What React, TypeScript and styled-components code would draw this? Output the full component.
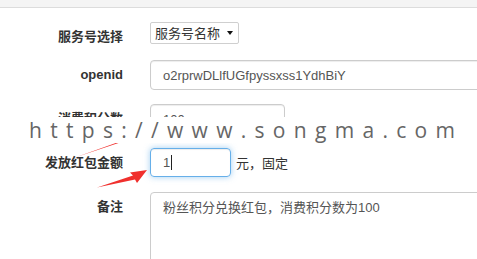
import styled, { createGlobalStyle } from "styled-components";

const GlobalStyle = createGlobalStyle`
  html, body {
    margin: 0;
    padding: 0;
    background: #fff;
    overflow: hidden;
  }
  body {
    font-family: "Liberation Sans", Arial, "Noto Sans CJK SC", sans-serif;
    font-size: 13px;
    color: #333;
  }
`;

const Page = styled.div`
  position: relative;
  width: 477px;
  height: 259px;
  overflow: hidden;
`;

const TopBar = styled.div`
  height: 7px;
  background: #f4f4f4;
  border-bottom: 1px solid #dcdcdc;
`;

const Form = styled.form`
  display: flex;
  flex-direction: column;
  gap: 14px;
  padding-top: 14px;
`;

const Row = styled.div<{ $minHeight?: number }>`
  display: flex;
  align-items: flex-start;
  gap: 27px;
  min-height: ${(p) => (p.$minHeight ? `${p.$minHeight}px` : "30px")};
`;

const Label = styled.label`
  flex-shrink: 0;
  width: 123px;
  padding-top: 7px;
  line-height: 16px;
  text-align: right;
  font-weight: bold;
  font-size: 13px;
  color: #333;
`;

const Control = styled.div`
  display: flex;
  align-items: center;
`;

const SelectBox = styled.div`
  display: flex;
  align-items: center;
  box-sizing: border-box;
  width: 89px;
  height: 22px;
  border: 1px solid #cfcfcf;
  border-radius: 2px;
  background: #fff;
`;

const NativeSelect = styled.select`
  appearance: none;
  border: none;
  background: transparent;
  padding: 0 0 0 4px;
  margin: 0;
  width: 76px;
  font: inherit;
  font-size: 13px;
  color: #333;
  outline: none;
`;

const Caret = styled.span`
  width: 0;
  height: 0;
  border-left: 3.5px solid transparent;
  border-right: 3.5px solid transparent;
  border-top: 4px solid #111;
`;

const TextInput = styled.input<{ $width: number }>`
  box-sizing: border-box;
  flex-shrink: 0;
  width: ${(p) => p.$width}px;
  height: 30px;
  padding: 0 12px;
  border: 1px solid #ccc;
  border-radius: 4px;
  font: inherit;
  font-size: 13px;
  color: #555;
  background: #fff;
  box-shadow: inset 0 1px 1px rgba(0, 0, 0, 0.075);
  outline: none;
`;

const FocusField = styled.div`
  box-sizing: border-box;
  display: flex;
  align-items: center;
  width: 81px;
  height: 29px;
  padding: 0 12px;
  border: 1px solid #66afe9;
  border-radius: 4px;
  font-size: 13px;
  color: #555;
  box-shadow: inset 0 1px 1px rgba(0, 0, 0, 0.075), 0 0 6px rgba(102, 175, 233, 0.6);
`;

const TextCaret = styled.span`
  display: inline-block;
  width: 1px;
  height: 15px;
  margin-left: 1px;
  background: #222;
`;

const Unit = styled.span`
  margin-left: 5px;
  font-size: 13px;
  color: #333;
`;

const TextArea = styled.textarea`
  box-sizing: border-box;
  flex-shrink: 0;
  width: 360px;
  height: 90px;
  padding: 6px 12px;
  border: 1px solid #ccc;
  border-radius: 4px;
  font: inherit;
  font-size: 13px;
  line-height: 18px;
  color: #555;
  resize: none;
  outline: none;
`;

const Arrows = styled.svg`
  position: absolute;
  left: 0;
  top: 0;
  pointer-events: none;
`;

const Watermark = styled.div`
  position: absolute;
  left: 0;
  right: 0;
  top: 117px;
  height: 26px;
  padding-left: 29px;
  background: #fff;
  font-family: "Open Sans", "DejaVu Sans", sans-serif;
  font-size: 21px;
  line-height: 26px;
  letter-spacing: 8.3px;
  color: #666;
  white-space: nowrap;
`;

export default function App() {
  return (
    <Page>
      <GlobalStyle />
      <TopBar />
      <Form onSubmit={(e) => e.preventDefault()}>
        <Row $minHeight={24}>
          <Label>服务号选择</Label>
          <SelectBox>
            <NativeSelect defaultValue="a">
              <option value="a">服务号名称</option>
            </NativeSelect>
            <Caret />
          </SelectBox>
        </Row>
        <Row>
          <Label>openid</Label>
          <TextInput $width={360} readOnly value="o2rprwDLlfUGfpyssxss1YdhBiY" />
        </Row>
        <Row>
          <Label>消费积分数</Label>
          <TextInput $width={135} readOnly value="100" />
        </Row>
        <Row>
          <Label>发放红包金额</Label>
          <Control>
            <FocusField>
              1<TextCaret />
            </FocusField>
            <Unit>元，固定</Unit>
          </Control>
        </Row>
        <Row>
          <Label>备注</Label>
          <TextArea readOnly value="粉丝积分兑换红包，消费积分数为100" />
        </Row>
      </Form>
      <Arrows width="477" height="259" viewBox="0 0 477 259">
        <polygon
          fill="#f0302d"
          points="75,157.5 134,136.5 133,128.5 152,128 137,140 135,137.5"
        />
        <polygon
          fill="#f0302d"
          points="97,187.5 133,175.5 130,172.5 147,170 137,183 135,179.5"
        />
      </Arrows>
      <Watermark>https://www.songma.com</Watermark>
    </Page>
  );
}
